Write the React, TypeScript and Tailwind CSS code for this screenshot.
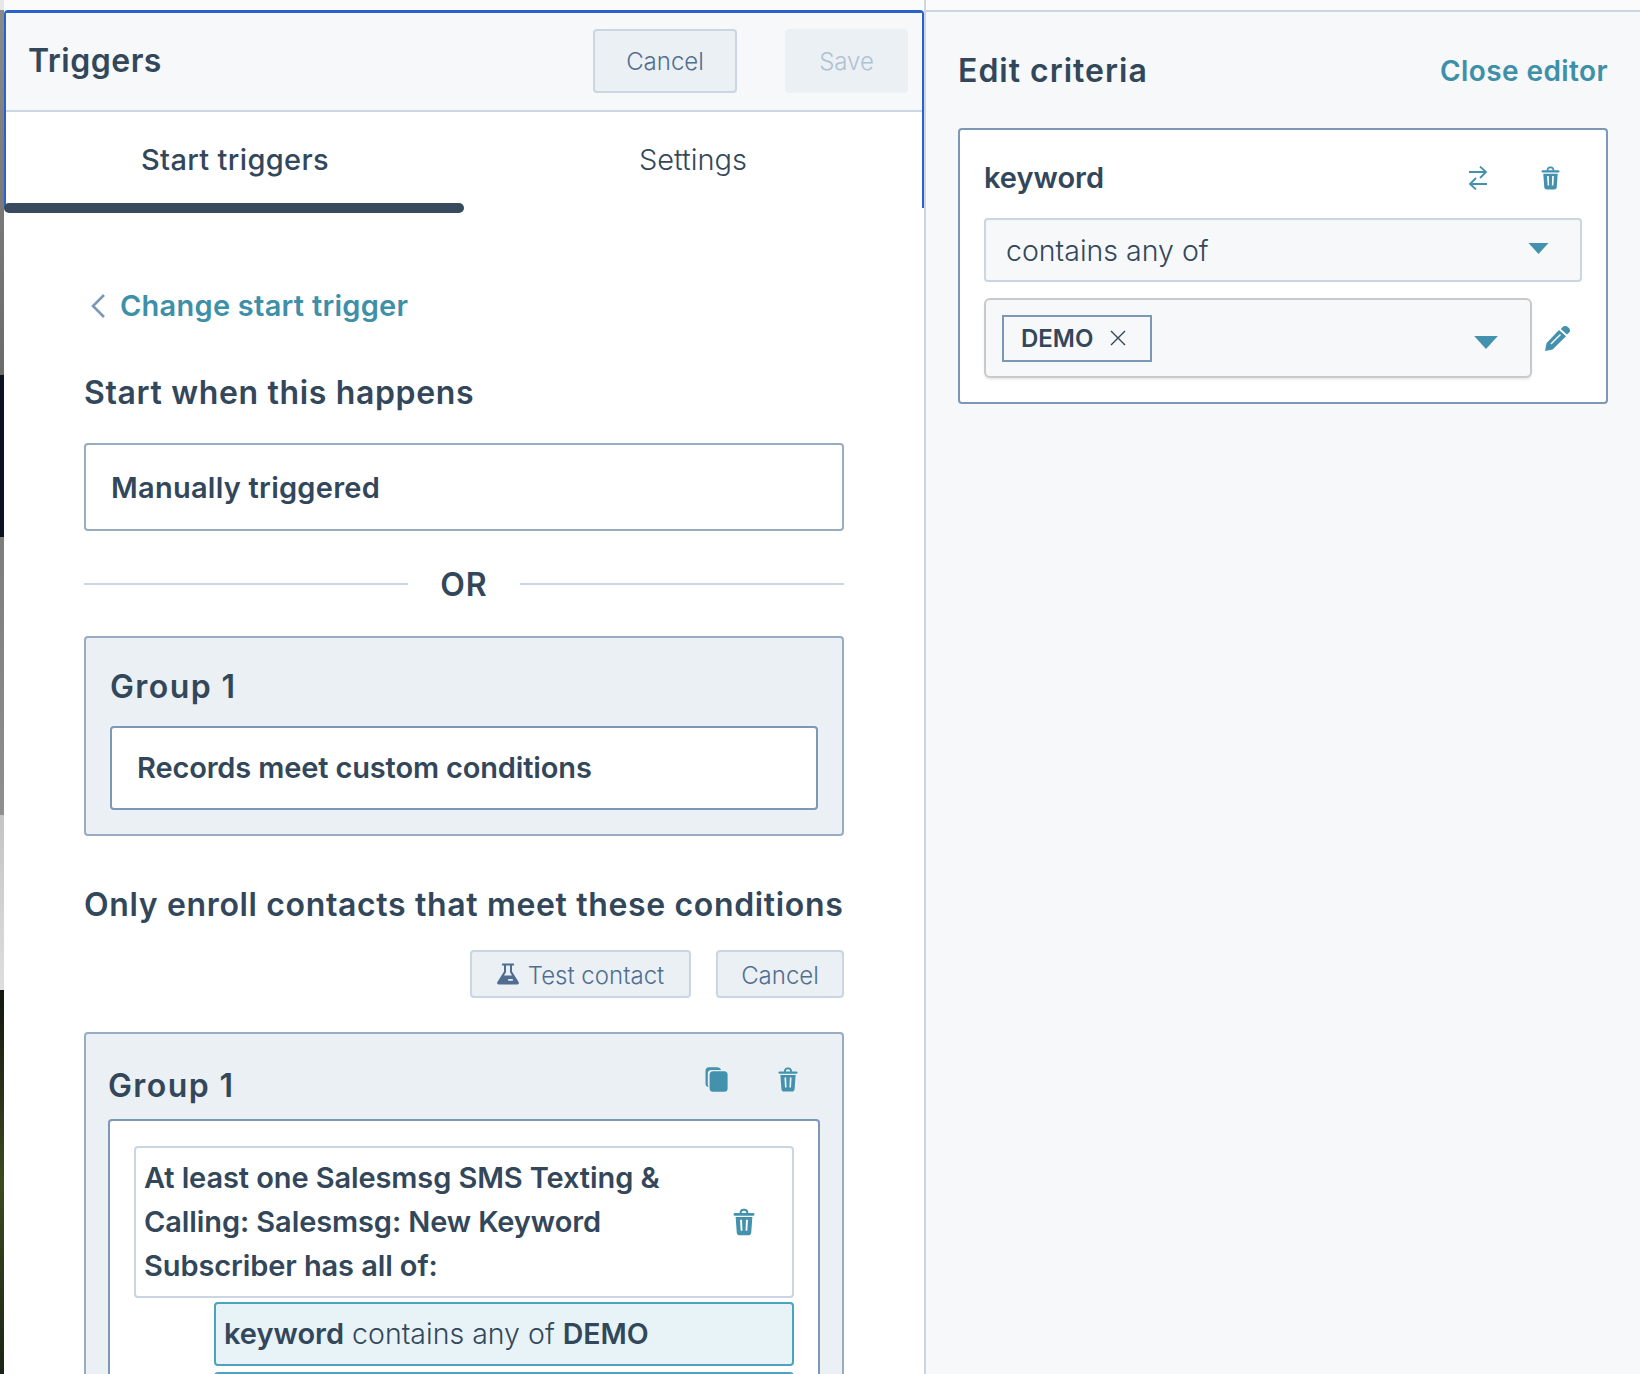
import React from 'react';

const font = { fontFamily: '"Inter", "Liberation Sans", sans-serif' };

function TrashIcon({ className }: { className: string }) {
  return (
    <svg viewBox="0 0 20 25" className={className} fill="currentColor">
      <path d="M6 5 C6 1.5 7.5 0.5 10 0.5 C12.5 0.5 14 1.5 14 5 L12.2 5 C12.2 3 11.5 2.3 10 2.3 C8.5 2.3 7.8 3 7.8 5 Z" />
      <rect x="0.5" y="4.4" width="19" height="2.4" rx="1.2" />
      <path fillRule="evenodd" d="M2.4 8 H17.6 L16.6 22 C16.5 23.6 15.4 24.6 14 24.6 H6 C4.6 24.6 3.5 23.6 3.4 22 Z M6.4 10.5 L7 20.5 H8.6 L8.2 10.5 Z M11.8 10.5 L11.4 20.5 H13 L13.6 10.5 Z" />
    </svg>
  );
}

function Caret({ className }: { className: string }) {
  return (
    <svg viewBox="0 0 20 11" className={className} fill="currentColor">
      <path d="M0 0 H20 L10 11 Z" />
    </svg>
  );
}

export default function App() {
  return (
    <div style={font} className="flex h-[1374px] w-[1640px] overflow-hidden bg-white text-[#33475b]">
      <div className="flex w-[4px] shrink-0 flex-col">
        <div className="h-[10px] shrink-0 bg-[#e8e8e8]" />
        <div className="h-[365px] shrink-0 bg-gradient-to-b from-[#8a8a8a] to-[#6b6b6b]" />
        <div className="h-[162px] shrink-0 bg-[#0a1222]" />
        <div className="h-[278px] shrink-0 bg-gradient-to-b from-[#7d7d7d] to-[#8f8f8f]" />
        <div className="h-[175px] shrink-0 bg-gradient-to-b from-[#c4c4c4] to-[#dedede]" />
        <div className="flex-1 bg-gradient-to-b from-[#14180f] via-[#3d4a20] to-[#1c2415]" />
      </div>

      <div className="flex w-[922px] shrink-0 flex-col border-r-2 border-[#cbd6e2]">
        <div className="h-[10px] shrink-0 bg-[#fbfbfb]" />
        <div className="relative h-[198px] shrink-0 rounded-t-[4px] border-x-2 border-t-[3px] border-[#2a62cc] bg-white">
          <div className="flex h-[99px] items-center justify-between border-b-2 border-[#cbd6e2] bg-[#f6f8fa] pl-[22px] pr-[14px]">
            <h1 className="-mt-[2px] text-[32px] font-semibold tracking-[0.5px]">Triggers</h1>
            <div className="-mt-[2px] flex gap-[48px]">
              <button className="h-[64px] w-[144px] rounded-[4px] border-2 border-[#cbd6e2] bg-[#ebf0f4] pt-[2px] text-[24px] font-light text-[#506e91]">Cancel</button>
              <button className="h-[64px] w-[123px] rounded-[4px] bg-[#ebf0f4] pt-[2px] text-[24px] font-light text-[#b0c1d4]">Save</button>
            </div>
          </div>
          <div className="flex pt-[2px]">
            <div className="flex h-[92px] w-[458px] items-center justify-center text-[29px] font-medium tracking-[0.35px]">Start triggers</div>
            <div className="flex h-[92px] w-[458px] items-center justify-center text-[29px] font-light">Settings</div>
          </div>
          <div className="absolute -bottom-[5px] -left-[2px] h-[10px] w-[460px] rounded-[5px] bg-[#3a4a5e]" />
        </div>

        <div className="ml-[80px] w-[760px]">
          <div className="mt-[78px] flex h-[40px] items-center gap-[14px] pl-[7px] text-[#3e8fa8]">
            <svg viewBox="0 0 15 24" className="h-[24px] w-[15px]" fill="none" stroke="#7c98b6" strokeWidth="2.6">
              <path d="M13 1 L2 12 L13 23" />
            </svg>
            <span className="text-[29px] font-semibold tracking-[0.25px]">Change start trigger</span>
          </div>

          <h2 className="mt-[47px] h-[40px] text-[32px] font-semibold leading-[40px] tracking-[0.65px]">Start when this happens</h2>

          <div className="mt-[30px] flex h-[88px] items-center rounded-[4px] border-2 border-[#99acc2] bg-white pl-[25px] pt-[1px] text-[29px] font-semibold tracking-[0.25px]">Manually triggered</div>

          <div className="mt-[33px] flex h-[40px] items-center justify-between">
            <div className="h-[2px] w-[324px] bg-[#cbd6e2]" />
            <span className="pt-[2px] text-[32px] font-semibold tracking-[1px]">OR</span>
            <div className="h-[2px] w-[324px] bg-[#cbd6e2]" />
          </div>

          <div className="mt-[32px] h-[200px] rounded-[4px] border-2 border-[#99acc2] bg-[#ebf0f4] px-[24px] pt-[29px]">
            <div className="h-[40px] text-[32px] font-semibold leading-[40px] tracking-[1.4px]">Group 1</div>
            <div className="mt-[19px] flex h-[84px] items-center rounded-[4px] border-2 border-[#7c98b6] bg-white pl-[25px] text-[29px] font-semibold tracking-[-0.15px]">Records meet custom conditions</div>
          </div>

          <h2 className="mt-[49px] h-[40px] whitespace-nowrap text-[32px] font-semibold leading-[40px] tracking-[0.65px]">Only enroll contacts that meet these conditions</h2>

          <div className="mt-[25px] flex justify-end gap-[25px]">
            <button className="flex h-[48px] w-[221px] items-center justify-center gap-[9px] rounded-[4px] border-2 border-[#cbd6e2] bg-[#ebf0f4] pt-[3px] text-[24px] font-light text-[#506e91]">
              <svg viewBox="0 0 22 22" className="-mt-[3px] h-[22px] w-[22px]" fill="currentColor">
                <path fillRule="evenodd" d="M5 0.5 H17 V2.6 H15 V8.5 L21.6 19 C22.4 20.4 21.6 21.6 20 21.6 H2 C0.4 21.6 -0.4 20.4 0.4 19 L7 8.5 V2.6 H5 Z M9 2.6 V9.2 L7 12.5 H15 L13 9.2 V2.6 Z" />
                <rect x="11" y="16" width="5" height="1.8" rx="0.9" fill="#ebf0f4" />
              </svg>
              Test contact
            </button>
            <button className="h-[48px] w-[128px] rounded-[4px] border-2 border-[#cbd6e2] bg-[#ebf0f4] pt-[3px] text-[24px] font-light text-[#506e91]">Cancel</button>
          </div>

          <div className="mt-[34px] rounded-[4px] border-2 border-[#99acc2] bg-[#ebf0f4] pl-[22px] pr-[22px] pt-[32px]">
            <div className="flex h-[40px] items-start justify-between">
              <div className="text-[32px] font-semibold leading-[40px] tracking-[1.4px]">Group 1</div>
              <div className="flex items-start gap-[50px] pr-[22px] pt-[1px] text-[#4391ad]">
                <svg viewBox="0 0 23 25" className="-ml-[1px] h-[25px] w-[23px]" fill="currentColor">
                  <path d="M4 20 C1.5 20 0.5 18.5 0.5 16.5 V4 C0.5 1.5 2 0.3 4 0.3 H12 C14 0.3 15.6 1.3 16 3 H6.5 C4 3 2.8 4.5 2.8 6.5 V17 C2.8 18.5 3 19.5 4 20 Z" />
                  <rect x="4.6" y="4.2" width="18" height="20.6" rx="3.5" />
                </svg>
                <TrashIcon className="h-[25px] w-[20px]" />
              </div>
            </div>

            <div className="mt-[13px] rounded-t-[4px] border-2 border-[#7c98b6] bg-white pl-[24px] pr-[24px] pt-[25px]">
              <div className="flex h-[152px] items-center rounded-[4px] border-2 border-[#cbd6e2] pl-[8px] pr-[37px]">
                <p className="w-[540px] text-[29px] font-semibold leading-[44px] tracking-[-0.1px]">
                  At least one Salesmsg SMS Texting &amp; Calling: Salesmsg: New Keyword Subscriber has all of:
                </p>
                <TrashIcon className="ml-auto h-[28px] w-[22px] text-[#4391ad]" />
              </div>
              <div className="ml-[80px] mt-[4px] flex h-[64px] items-center rounded-[4px] border-2 border-[#4ba3bd] bg-[#e7f3f7] pl-[8px] text-[28.5px]">
                <span className="text-[29px] font-semibold">keyword</span>
                <span className="ml-[8px] font-light">contains any of</span>
                <span className="ml-[8px] font-semibold">DEMO</span>
              </div>
              <div className="ml-[80px] mt-[6px] h-[62px] rounded-[4px] border-2 border-[#4ba3bd] bg-[#e7f3f7]" />
            </div>
          </div>
        </div>
      </div>

      <div className="flex-1 bg-[#f6f8fa]">
        <div className="h-[10px] bg-[#fbfbfb]" />
        <div className="h-[2px] bg-[#cbd6e2]" />
        <div className="pl-[32px] pr-[32px] pt-[38px]">
          <div className="flex h-[40px] items-center justify-between pt-[2px]">
            <h2 className="text-[32px] font-semibold tracking-[1px]">Edit criteria</h2>
            <a className="text-[28px] font-semibold tracking-[0.4px] text-[#3e8fa8]">Close editor</a>
          </div>

          <div className="mt-[38px] h-[276px] rounded-[4px] border-2 border-[#7c98b6] bg-white pl-[24px] pr-[24px] pt-[28px]">
            <div className="flex h-[40px] items-center justify-between pr-[22px]">
              <span className="text-[29px] font-semibold">keyword</span>
              <div className="flex items-center gap-[53px] text-[#4391ad]">
                <svg viewBox="0 0 20 24" className="h-[24px] w-[20px]" fill="none" stroke="currentColor" strokeWidth="1.8">
                  <path d="M1 6 H18 M12 0.5 L18 6 L12 12" />
                  <path d="M19 18 H2 M8 12 L2 18 L8 23.5" />
                </svg>
                <TrashIcon className="h-[24px] w-[19px]" />
              </div>
            </div>

            <div className="mt-[20px] flex h-[64px] items-center justify-between rounded-[4px] border-2 border-[#cbd6e2] bg-[#f6f8fa] pl-[20px] pr-[31px] text-[28.5px] font-light">
              <span className="pt-[2px]">contains any of</span>
              <Caret className="-mt-[4px] h-[11px] w-[21px] text-[#4391ad]" />
            </div>

            <div className="mt-[16px] flex items-center">
              <div className="flex h-[80px] w-[548px] items-center justify-between rounded-[6px] border-2 border-[#c9c9c9] bg-[#f6f8fa] pl-[16px] pr-[32px] shadow-[0_2px_2px_rgba(0,0,0,0.08)]">
                <div className="flex h-[47px] w-[150px] items-center border-2 border-[#7c98b6] bg-[#f6f8fa] pl-[17px]">
                  <span className="pt-[1px] text-[24px] font-semibold">DEMO</span>
                  <svg viewBox="0 0 16 16" className="ml-[17px] h-[16px] w-[16px]" fill="none" stroke="#33475b" strokeWidth="1.4">
                    <path d="M1 1 L15 15 M15 1 L1 15" />
                  </svg>
                </div>
                <Caret className="mt-[8px] h-[13px] w-[24px] text-[#4391ad]" />
              </div>
              <svg viewBox="0 0 25 25" className="ml-[13px] h-[25px] w-[25px] text-[#4391ad]" fill="currentColor">
                <path d="M18 0.8 C19.4 -0.5 21.6 -0.3 23.4 1.4 C25.2 3.1 25.6 5 24.2 6.4 L22 8.6 L15.8 3 Z" />
                <path fillRule="evenodd" d="M14 4 L21 10.2 L7.6 23.6 L0 25 L1.6 17 Z M15 8 L5.4 17.6 L6.4 18.6 L16 9 Z" />
              </svg>
            </div>
          </div>
        </div>
      </div>
    </div>
  );
}
